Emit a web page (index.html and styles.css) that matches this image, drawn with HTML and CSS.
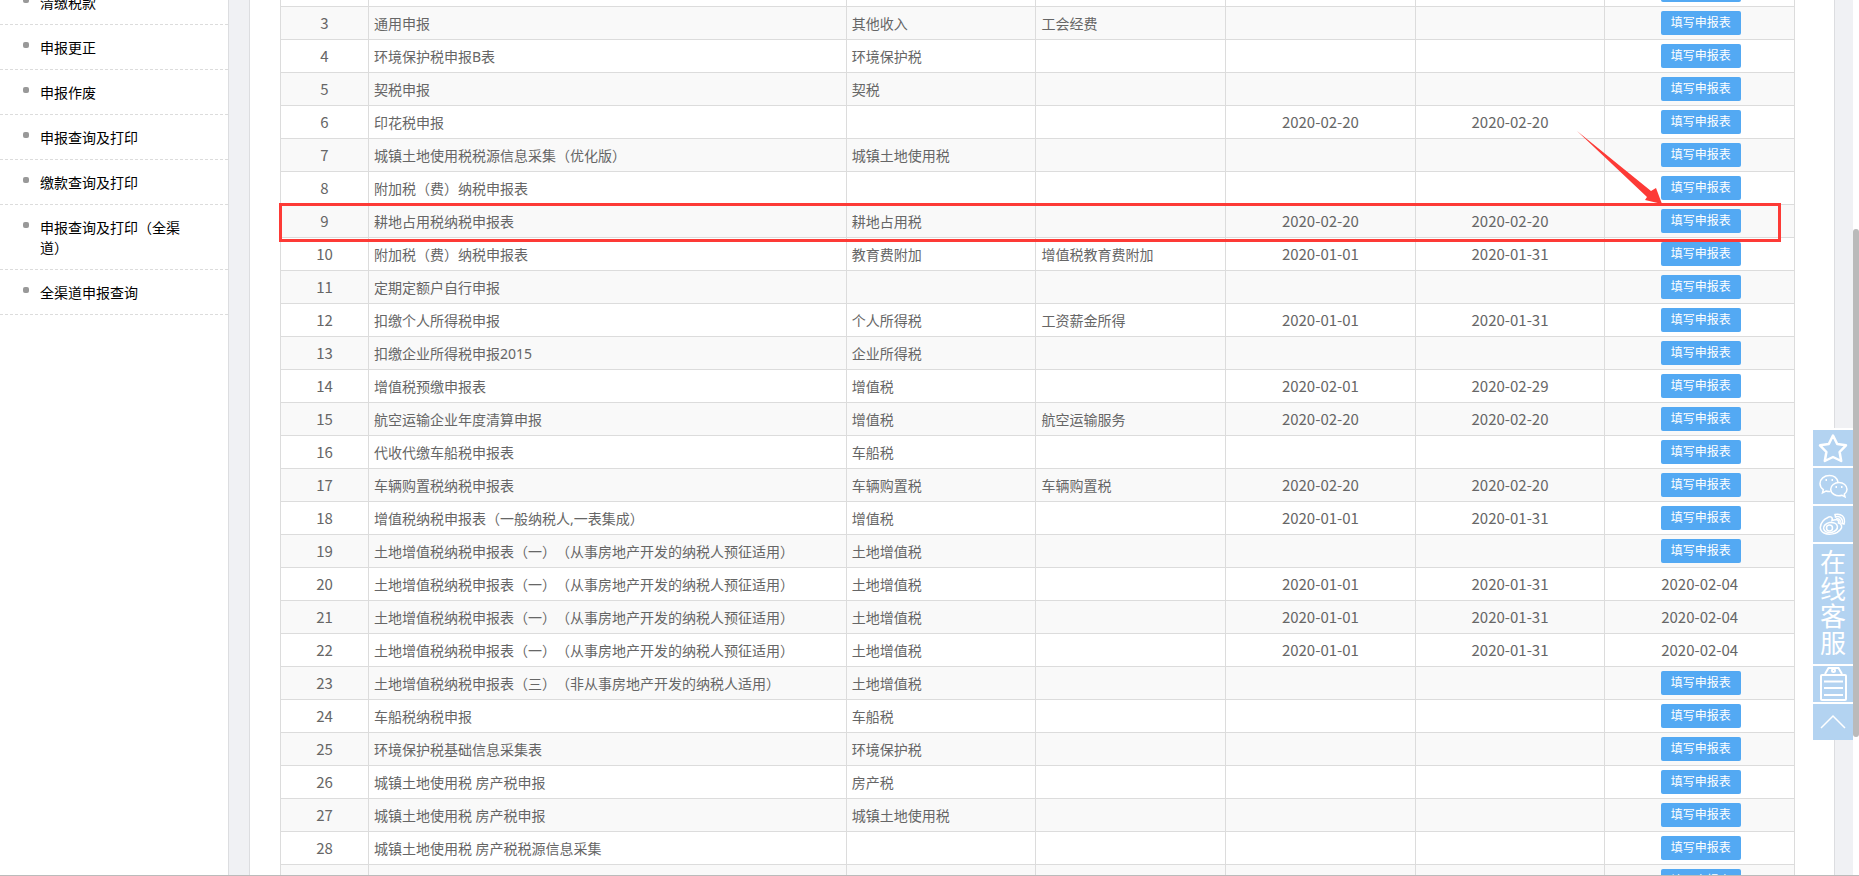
FILE: index.html
```html
<!DOCTYPE html>
<html lang="zh-CN">
<head>
    <meta charset="UTF-8">
    <meta name="viewport" content="width=device-width, initial-scale=1.0">
    <title>申报缴税</title>
    <link rel="stylesheet" href="styles.css">
</head>
<body>
    <div class="viewport">
        <div class="page">
            <nav class="sidebar">
                <ul class="menu">
                    <li><a href="#">清缴税款</a></li>
                    <li><a href="#">申报更正</a></li>
                    <li><a href="#">申报作废</a></li>
                    <li><a href="#">申报查询及打印</a></li>
                    <li><a href="#">缴款查询及打印</a></li>
                    <li><a href="#">申报查询及打印（全渠道）</a></li>
                    <li><a href="#">全渠道申报查询</a></li>
                </ul>
            </nav>

            <main class="content">
                <div class="table-wrap">
                    <table class="report-table">
                        <colgroup>
                            <col class="col-no">
                            <col class="col-name">
                            <col class="col-item">
                            <col class="col-item">
                            <col class="col-item">
                            <col class="col-item">
                            <col class="col-item">
                        </colgroup>
                        <tbody id="reportBody"></tbody>
                    </table>
                    <div class="highlight"></div>
                    <svg class="arrow" viewBox="0 0 86 74" width="86" height="74">
                        <path d="M0 0 L74 60 L79 57 L85 73 L68 69 L70 66 Z" fill="#fd3a36"/>
                    </svg>
                </div>
            </main>
        </div>
        <div class="scrollbar"><div class="scrollbar-thumb"></div></div>
    </div>

    <div class="float-bar">
        <a class="float-item" href="#" aria-label="收藏">
            <svg viewBox="0 0 40 36" width="40" height="36"><path d="M20 5.500 L24.200 14 L33 15.300 L26.600 22 L28.200 31 L20 27 L11.800 31 L13.400 22 L7 15.300 L15.800 14 Z" stroke-width="2.500" stroke-linejoin="round"/></svg>
        </a>
        <a class="float-item" href="#" aria-label="微信">
            <svg viewBox="0 0 40 36" width="40" height="36">
                <path d="M25 14 C24 10 20.500 7.500 16.500 7.500 C11 7.500 7 11 7 15.500 C7 18 8.300 20.200 10.300 21.700 L9.500 24.800 L13 23 C14.500 23.500 16 23.600 17.500 23.400"/>
                <path d="M26 14.500 C30.500 14.500 34 17.500 34 21.200 C34 23.300 33 25 31.300 26.200 L32 28.800 L29 27.300 C23 29 17.700 25.500 17.700 21.200 C17.700 17.500 21.500 14.500 26 14.500 Z"/>
                <path d="M12.500 12 h1.500 M18.500 12 h1.500 M22.500 19 h1.500 M28 19 h1.500" stroke-width="2"/>
            </svg>
        </a>
        <a class="float-item" href="#" aria-label="微博">
            <svg viewBox="0 0 40 36" width="40" height="36">
                <path d="M14 12 C18 9.500 20 11.500 19 14.500 C23 13 26.500 13.500 25.500 17 C29 18 29.500 21 27.500 23.500 C24 28 16 29.500 11 27 C6 24.500 6.500 19 10 15 C11.300 13.500 12.700 12.500 14 12 Z"/>
                <ellipse cx="17.500" cy="21.500" rx="7" ry="5" transform="rotate(-10 17.500 21.500)"/>
                <circle cx="16.500" cy="22" r="3"/>
                <path d="M22 8.500 C28 7 33 11 31 18 L29 17.500 C30.500 13 27 9.500 22.500 11 Z M23 13 C26 12 28 14 27 17"/>
            </svg>
        </a>
        <a class="float-item float-text" href="#">在线客服</a>
        <a class="float-item" href="#" aria-label="办税清单">
            <svg viewBox="0 0 40 36" width="40" height="36">
                <g stroke-width="2">
                    <rect x="8" y="9" width="25" height="25" rx="1"/>
                    <path d="M12 8 L15.500 2 H25.500 L29 8 M11 15.500 H30 M11 22 H30 M11 29 H30"/>
                    <circle cx="20.500" cy="4.500" r="1.500"/>
                </g>
            </svg>
        </a>
        <a class="float-item" href="#" aria-label="返回顶部">
            <svg viewBox="0 0 40 36" width="40" height="36"><path d="M8 24 L20 12 L32 24"/></svg>
        </a>
    </div>

    <script>
        // [序号, 申报表, 征收项目, 征收品目, 所属期起, 所属期止, 申报日期]
        const rows = [
            [2, '', '', '', '', '', ''],
            [3, '通用申报', '其他收入', '工会经费', '', '', ''],
            [4, '环境保护税申报B表', '环境保护税', '', '', '', ''],
            [5, '契税申报', '契税', '', '', '', ''],
            [6, '印花税申报', '', '', '2020-02-20', '2020-02-20', ''],
            [7, '城镇土地使用税税源信息采集（优化版）', '城镇土地使用税', '', '', '', ''],
            [8, '附加税（费）纳税申报表', '', '', '', '', ''],
            [9, '耕地占用税纳税申报表', '耕地占用税', '', '2020-02-20', '2020-02-20', ''],
            [10, '附加税（费）纳税申报表', '教育费附加', '增值税教育费附加', '2020-01-01', '2020-01-31', ''],
            [11, '定期定额户自行申报', '', '', '', '', ''],
            [12, '扣缴个人所得税申报', '个人所得税', '工资薪金所得', '2020-01-01', '2020-01-31', ''],
            [13, '扣缴企业所得税申报2015', '企业所得税', '', '', '', ''],
            [14, '增值税预缴申报表', '增值税', '', '2020-02-01', '2020-02-29', ''],
            [15, '航空运输企业年度清算申报', '增值税', '航空运输服务', '2020-02-20', '2020-02-20', ''],
            [16, '代收代缴车船税申报表', '车船税', '', '', '', ''],
            [17, '车辆购置税纳税申报表', '车辆购置税', '车辆购置税', '2020-02-20', '2020-02-20', ''],
            [18, '增值税纳税申报表（一般纳税人,一表集成）', '增值税', '', '2020-01-01', '2020-01-31', ''],
            [19, '土地增值税纳税申报表（一）（从事房地产开发的纳税人预征适用）', '土地增值税', '', '', '', ''],
            [20, '土地增值税纳税申报表（一）（从事房地产开发的纳税人预征适用）', '土地增值税', '', '2020-01-01', '2020-01-31', '2020-02-04'],
            [21, '土地增值税纳税申报表（一）（从事房地产开发的纳税人预征适用）', '土地增值税', '', '2020-01-01', '2020-01-31', '2020-02-04'],
            [22, '土地增值税纳税申报表（一）（从事房地产开发的纳税人预征适用）', '土地增值税', '', '2020-01-01', '2020-01-31', '2020-02-04'],
            [23, '土地增值税纳税申报表（三）（非从事房地产开发的纳税人适用）', '土地增值税', '', '', '', ''],
            [24, '车船税纳税申报', '车船税', '', '', '', ''],
            [25, '环境保护税基础信息采集表', '环境保护税', '', '', '', ''],
            [26, '城镇土地使用税 房产税申报', '房产税', '', '', '', ''],
            [27, '城镇土地使用税 房产税申报', '城镇土地使用税', '', '', '', ''],
            [28, '城镇土地使用税 房产税税源信息采集', '', '', '', '', ''],
            [29, '', '', '', '', '', '']
        ];

        document.getElementById('reportBody').innerHTML = rows.map(r => `
            <tr>
                <td class="center">${r[0]}</td>
                <td>${r[1]}</td>
                <td>${r[2]}</td>
                <td>${r[3]}</td>
                <td class="center">${r[4]}</td>
                <td class="center">${r[5]}</td>
                ${r[6] ? `<td class="center">${r[6]}</td>` : '<td class="action"><button class="fill-btn" type="button">填写申报表</button></td>'}
            </tr>`).join('');
    </script>
</body>
</html>
```
FILE: styles.css
```css
* { box-sizing: border-box; }
body { margin: 0; font-family: "Noto Sans", "Noto Sans CJK SC", sans-serif; font-size: 14px; line-height: 20px; color: #666; background: #fff; text-spacing-trim: space-all; }
a { color: inherit; text-decoration: none; }

.viewport { display: flex; height: 100vh; overflow: hidden; border-bottom: 1px solid #bbb; }

/* list is scrolled part of the way through row 2 */
.page { display: flex; flex: 1; align-self: flex-start; margin-top: -27px; background: #f0f1f4; }

.sidebar { width: 229px; padding-top: 7px; background: #fff; border-right: 1px solid #dcdde0; }
.menu { list-style: none; margin: 0; padding: 0; }
.menu li { position: relative; padding: 13px 40px 11px; border-bottom: 1px dashed #dcdcdc; color: #000; }
.menu li::before { content: ""; position: absolute; left: 23px; top: 17px; width: 6px; height: 6px; border-radius: 2px; background: #999; }

.content { flex: 1; margin: 0 18px 0 20px; padding: 0 39px 0 30px; background: #fff; border: 1px solid #dcdde0; border-width: 0 1px; }
.table-wrap { position: relative; }

.report-table { width: 100%; table-layout: fixed; border-collapse: collapse; }
.report-table td { height: 33px; padding: 2px 5px 0; border: 1px solid #dcdcdc; white-space: nowrap; }
.report-table tr:nth-child(even) { background: #f9f9f9; }
.report-table .center { padding-top: 0; text-align: center; font-family: "Noto Sans CJK SC", sans-serif; font-size: 15px; }
.report-table .action { padding: 0 4px 0 6px; }
.col-no { width: 5.8%; }
.col-name { width: 31.5%; }
.col-item { width: 12.5%; }

.fill-btn { display: block; height: 24px; margin: 0 auto; padding: 0 10px; border: 0; border-radius: 2px; background: #53a9f3; color: #fff; font-family: inherit; font-size: 12px; line-height: 24px; cursor: pointer; }

/* red marks over row 9 */
.highlight { position: absolute; top: 230px; left: -1px; right: 14px; height: 39px; border: 3px solid #fd3a36; }
.arrow { position: absolute; top: 158px; right: 132px; }

.scrollbar { width: 6px; background: #fff; }
.scrollbar-thumb { height: 58%; margin-top: 229px; border-radius: 3px; background: #bababa; }

.float-bar { position: fixed; right: 6px; bottom: 136px; width: 40px; color: #fff; background: #fff; }
.float-item { display: block; margin-top: 2px; background: #b3d3f1; }
.float-item svg { display: block; fill: none; stroke: #fff; stroke-width: 1.5; }
.float-text { height: 120px; padding: 5px 7px; font-size: 26px; line-height: 27px; word-break: break-all; }
```
